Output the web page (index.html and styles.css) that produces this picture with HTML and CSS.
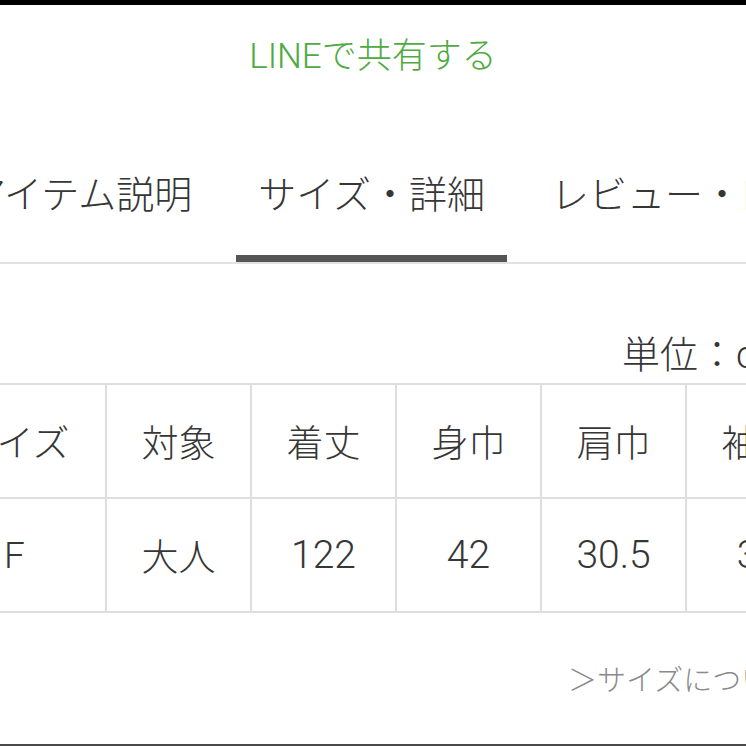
FILE: index.html
```html
<!DOCTYPE html>
<html lang="ja">
<head>
<meta charset="utf-8">
<link rel="stylesheet" href="styles.css">
</head>
<body>
<div class="page">
  <div class="topbar"></div>
  <div class="share">LINEで共有する</div>
  <nav class="tabs">
    <div class="tab">アイテム説明</div>
    <div class="tab active">サイズ・詳細</div>
    <div class="tab">レビュー・口コミ</div>
  </nav>
  <div class="unit">単位：cm</div>
  <table class="size-table">
    <colgroup>
      <col class="c-first"><col class="c"><col class="c"><col class="c"><col class="c"><col class="c"><col class="c">
    </colgroup>
    <tr>
      <td>サイズ</td><td>対象</td><td>着丈</td><td>身巾</td><td>肩巾</td><td>袖丈</td><td>裄丈</td>
    </tr>
    <tr>
      <td>F</td><td>大人</td><td class="num">122</td><td class="num">42</td><td class="num">30.5</td><td class="num">35</td><td class="num">50</td>
    </tr>
  </table>
  <div class="more">＞サイズについて</div>
  <div class="bottomline"></div>
</div>
</body>
</html>
```

FILE: styles.css
```css
html, body {
  margin: 0;
  padding: 0;
  background: #fff;
}
.page {
  width: 746px;
  height: 746px;
  overflow: hidden;
  display: flex;
  flex-direction: column;
  align-items: flex-start;
  font-family: "Roboto", "Noto Sans CJK JP", sans-serif;
  font-weight: 300;
  color: #363636;
}
.topbar {
  height: 5px;
  width: 746px;
  background: #000;
  flex: none;
}
.share {
  width: 746px;
  height: 115px;
  box-sizing: border-box;
  padding-top: 32px;
  line-height: 40px;
  font-size: 35px;
  text-align: center;
  color: #4eaa41;
  flex: none;
}
.tabs {
  display: flex;
  gap: 22px;
  width: 830px;
  margin-left: -54px;
  border-bottom: 2px solid #e2e2e2;
  white-space: nowrap;
  flex: none;
}
.tab {
  font-size: 38px;
  line-height: 40px;
  padding: 55px 22px 40px;
  border-bottom: 7px solid transparent;
  color: #363636;
  flex: none;
}
.tab.active {
  border-bottom-color: #555;
}
.unit {
  margin-top: 71px;
  padding-left: 622px;
  font-size: 38px;
  line-height: 40px;
  white-space: nowrap;
  flex: none;
}
.size-table {
  margin-top: 8px;
  margin-left: -78px;
  width: 1053px;
  border-collapse: collapse;
  table-layout: fixed;
  flex: none;
}
.c-first {
  width: 183px;
}
.c {
  width: 145px;
}
.size-table td {
  height: 112px;
  border: 2px solid #dedede;
  text-align: center;
  vertical-align: middle;
  font-size: 37px;
  padding: 0;
  white-space: nowrap;
}
.size-table td.num {
  font-size: 39px;
}
.more {
  margin-top: 50px;
  padding-left: 568px;
  font-size: 29px;
  line-height: 36px;
  color: #8a8a8a;
  white-space: nowrap;
  flex: none;
}
.bottomline {
  margin-top: auto;
  width: 746px;
  height: 2px;
  background: #4a4a4a;
  flex: none;
}
```
